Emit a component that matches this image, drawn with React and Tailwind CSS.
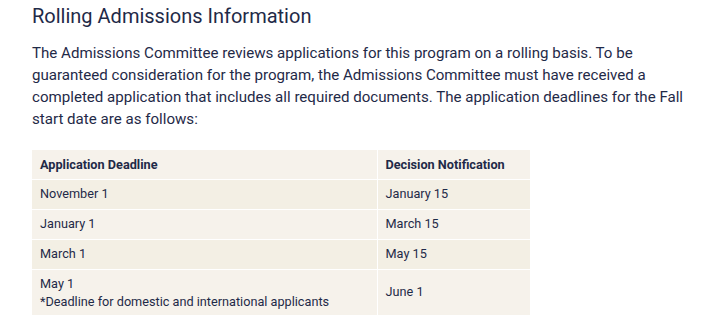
const rows = [
  { deadline: 'November 1', decision: 'January 15' },
  { deadline: 'January 1', decision: 'March 15' },
  { deadline: 'March 1', decision: 'May 15' },
  {
    deadline: 'May 1',
    note: '*Deadline for domestic and international applicants',
    decision: 'June 1',
  },
];

export default function App() {
  return (
    <div
      className="min-h-screen bg-white px-8 pt-[2px] text-[#1f2a48]"
      style={{ fontFamily: 'Roboto, "Liberation Sans", sans-serif' }}
    >
      <h2 className="text-[20px] leading-[28px] font-normal">Rolling Admissions Information</h2>

      {/* intro */}
      <p className="mt-[12px] text-[15.1px] leading-[22px]">
        The Admissions Committee reviews applications for this program on a rolling basis. To be
        guaranteed consideration for the program, the Admissions Committee must have received a
        completed application that includes all required documents. The application deadlines for
        the Fall start date are as follows:
      </p>

      <table className="mt-[20px] w-[498px] border-collapse text-[12.7px]">
        <thead>
          <tr className="bg-[#f6f2eb]">
            <th className="h-[29px] w-[345px] border-r border-b border-white px-2 text-left font-bold">
              Application Deadline
            </th>
            <th className="h-[29px] border-b border-white px-2 text-left font-bold">
              Decision Notification
            </th>
          </tr>
        </thead>
        <tbody>
          {rows.map((r, i) => (
            <tr key={r.deadline} className={i % 2 === 0 ? 'bg-[#f3efe4]' : 'bg-[#f6f2eb]'}>
              <td className={`border-r border-white px-2 ${r.note ? 'pt-[5px] pb-[4px] leading-[18px]' : 'h-[30px]'} ${i < rows.length - 1 ? 'border-b' : ''}`}>
                {r.deadline}
                {r.note && (
                  <>
                    <br />
                    {r.note}
                  </>
                )}
              </td>
              <td className={`border-white px-2 ${i < rows.length - 1 ? 'border-b' : ''}`}>{r.decision}</td>
            </tr>
          ))}
        </tbody>
      </table>
    </div>
  );
}
